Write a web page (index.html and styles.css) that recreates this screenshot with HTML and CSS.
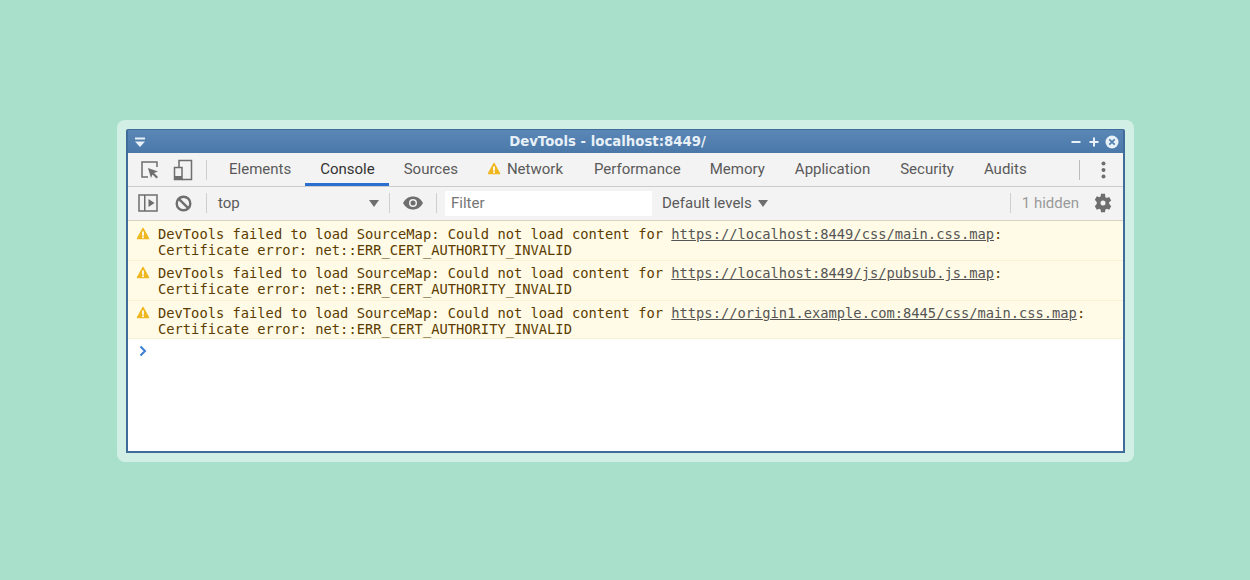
FILE: index.html
```html
<!DOCTYPE html>
<html lang="en">
<head>
<meta charset="utf-8">
<title>DevTools</title>
<link rel="stylesheet" href="styles.css">
</head>
<body>
<main class="panel">
  <div class="window">
    <header class="titlebar">
      <svg class="menu-icon" width="12" height="10" viewBox="0 0 12 10"><rect x="1" y="0.5" width="10" height="2" fill="#e8f0f8"/><path d="M1 4.5h10L6 10z" fill="#e8f0f8"/></svg>
      <span class="title">DevTools - localhost:8449/</span>
      <div class="winbtns">
        <svg width="10" height="10" viewBox="0 0 10 10"><rect x="0.5" y="4" width="9" height="2" fill="#e8f0f8"/></svg>
        <svg width="10" height="10" viewBox="0 0 10 10"><path d="M4 0.5h2V4h3.500v2H6v3.500H4V6H0.500V4H4z" fill="#e8f0f8"/></svg>
        <svg class="close" width="14" height="14" viewBox="0 0 14 14"><circle cx="7" cy="7" r="6.500" fill="#e8f0f8"/><path d="M4.300 4.300l5.400 5.400M9.700 4.300l-5.400 5.400" stroke="#4f7fb0" stroke-width="1.700"/></svg>
      </div>
    </header>
    <nav class="tabs">
      <div class="tool-icons">
        <svg width="20" height="20" viewBox="0 0 20 20"><path d="M8 17H2V2h15v5" fill="none" stroke="#6e6e6e" stroke-width="1.500"/><path d="M8 8l10 3.500-4 1.500 4 4-1.500 1.500-4-4L11 18z" fill="#6e6e6e"/></svg>
        <svg width="20" height="22" viewBox="0 0 20 22"><path d="M6 8V1.500h12.500v19H9" fill="none" stroke="#6e6e6e" stroke-width="1.500"/><rect x="1.500" y="8.500" width="7.500" height="12" fill="none" stroke="#6e6e6e" stroke-width="1.500"/><rect x="1.500" y="17" width="7.500" height="3.500" fill="#6e6e6e"/></svg>
      </div>
      <span class="sep"></span>
      <a class="tab tight">Elements</a>
      <a class="tab tight active">Console</a>
      <a class="tab">Sources</a>
      <a class="tab warn-tab"><svg class="warn" width="14" height="13" viewBox="0 0 14 13"><path d="M7 1.500L12.500 11.500H1.500z" fill="#efb71f" stroke="#efb71f" stroke-width="1.500" stroke-linejoin="round"/><rect x="6.100" y="4.500" width="1.800" height="4.200" fill="#fff"/><rect x="6.100" y="9.400" width="1.800" height="1.700" fill="#fff"/></svg>Network</a>
      <a class="tab tight">Performance</a>
      <a class="tab">Memory</a>
      <a class="tab">Application</a>
      <a class="tab">Security</a>
      <a class="tab">Audits</a>
      <span class="sep tall"></span>
      <svg class="dots" width="5" height="18" viewBox="0 0 5 18"><circle cx="2.500" cy="2.500" r="2" fill="#6e6e6e"/><circle cx="2.500" cy="9" r="2" fill="#6e6e6e"/><circle cx="2.500" cy="15.500" r="2" fill="#6e6e6e"/></svg>
    </nav>
    <div class="toolbar">
      <svg class="sidebar-icon" width="20" height="18" viewBox="0 0 20 18"><rect x="1" y="1" width="18" height="16" fill="none" stroke="#6e6e6e" stroke-width="1.500"/><rect x="6" y="1" width="1.500" height="16" fill="#6e6e6e"/><path d="M10.500 5l6 4-6 4z" fill="#6e6e6e"/></svg>
      <svg class="clear-icon" width="17" height="17" viewBox="0 0 17 17"><circle cx="8.500" cy="8.500" r="6.800" fill="none" stroke="#6e6e6e" stroke-width="2.400"/><path d="M3.800 3.800l9.400 9.400" stroke="#6e6e6e" stroke-width="2.400"/></svg>
      <span class="sep"></span>
      <div class="context"><span>top</span><i class="caret"></i></div>
      <span class="sep"></span>
      <svg class="eye" width="20" height="14" viewBox="0 0 20 14"><path d="M0 7C2.500 2.500 6 0.500 10 0.500S17.500 2.500 20 7c-2.500 4.500-6 6.500-10 6.500S2.500 11.500 0 7z" fill="#6e6e6e"/><circle cx="10" cy="7" r="4" fill="#f3f3f3"/><circle cx="10" cy="7" r="2.500" fill="#6e6e6e"/></svg>
      <span class="sep"></span>
      <div class="filter">Filter</div>
      <div class="levels">Default levels<i class="caret"></i></div>
      <span class="spacer"></span>
      <span class="sep"></span>
      <span class="hidden-count">1 hidden</span>
      <svg class="gear" width="20" height="20" viewBox="0 0 24 24"><path fill="#6e6e6e" fill-rule="evenodd" d="M19.400 13a7.600 7.600 0 0 0 0-2l2.400-1.900-2.400-4.200-2.900 1.200a7.400 7.400 0 0 0-1.700-1L14.400 1H9.600l-.4 3.100a7.400 7.400 0 0 0-1.700 1L4.600 3.900 2.200 8.100 4.600 11a7.600 7.600 0 0 0 0 2l-2.400 2.900 2.400 4.200 2.900-1.200a7.400 7.400 0 0 0 1.700 1l.4 3.100h4.800l.4-3.100a7.400 7.400 0 0 0 1.700-1l2.900 1.200 2.400-4.200zM12 15a3 3 0 1 1 0-6 3 3 0 0 1 0 6z"/></svg>
    </div>
    <section class="console">
      <div class="msg">
        <svg class="warn" width="14" height="13" viewBox="0 0 14 13"><path d="M7 1.500L12.500 11.500H1.500z" fill="#efb71f" stroke="#efb71f" stroke-width="1.500" stroke-linejoin="round"/><rect x="6.100" y="4.500" width="1.800" height="4.200" fill="#fff"/><rect x="6.100" y="9.400" width="1.800" height="1.700" fill="#fff"/></svg>
        <p>DevTools failed to load SourceMap: Could not load content for <u>https://localhost:8449/css/main.css.map</u>:<br>Certificate error: net::ERR_CERT_AUTHORITY_INVALID</p>
      </div>
      <div class="msg">
        <svg class="warn" width="14" height="13" viewBox="0 0 14 13"><path d="M7 1.500L12.500 11.500H1.500z" fill="#efb71f" stroke="#efb71f" stroke-width="1.500" stroke-linejoin="round"/><rect x="6.100" y="4.500" width="1.800" height="4.200" fill="#fff"/><rect x="6.100" y="9.400" width="1.800" height="1.700" fill="#fff"/></svg>
        <p>DevTools failed to load SourceMap: Could not load content for <u>https://localhost:8449/js/pubsub.js.map</u>:<br>Certificate error: net::ERR_CERT_AUTHORITY_INVALID</p>
      </div>
      <div class="msg">
        <svg class="warn" width="14" height="13" viewBox="0 0 14 13"><path d="M7 1.500L12.500 11.500H1.500z" fill="#efb71f" stroke="#efb71f" stroke-width="1.500" stroke-linejoin="round"/><rect x="6.100" y="4.500" width="1.800" height="4.200" fill="#fff"/><rect x="6.100" y="9.400" width="1.800" height="1.700" fill="#fff"/></svg>
        <p>DevTools failed to load SourceMap: Could not load content for <u>https://origin1.example.com:8445/css/main.css.map</u>:<br>Certificate error: net::ERR_CERT_AUTHORITY_INVALID</p>
      </div>
      <svg class="prompt" width="8" height="12" viewBox="0 0 8 12"><path d="M1.500 1.500L6 6l-4.500 4.500" fill="none" stroke="#3a7fd5" stroke-width="2"/></svg>
    </section>
  </div>
</main>
</body>
</html>
```
FILE: styles.css
```css
html, body {
  margin: 0;
  height: 100%;
}
body {
  background: #a8e0cb;
  overflow: hidden;
  padding-top: 120px;
  box-sizing: border-box;
  font-family: Roboto, "Liberation Sans", sans-serif;
}
.panel {
  width: 1017px;
  height: 342px;
  margin-left: 117px;
  padding: 9px;
  box-sizing: border-box;
  background: #d1efe5;
  border-radius: 8px;
}
.window {
  height: 100%;
  box-sizing: border-box;
  border: 2px solid #3f6c9b;
  border-top-width: 1px;
  border-radius: 2px 2px 0 0;
  background: #fff;
  display: flex;
  flex-direction: column;
}
.titlebar {
  height: 23px;
  flex: none;
  display: flex;
  align-items: center;
  justify-content: space-between;
  padding: 0 4px 0 6px;
  background: linear-gradient(#5a87b6, #4a78a8);
  position: relative;
}
.title {
  position: absolute;
  left: 0;
  right: 36px;
  top: 4px;
  text-align: center;
  font: bold 13.300px "DejaVu Sans", sans-serif;
  color: #e8f0f8;
}
.winbtns {
  display: flex;
  align-items: center;
  gap: 8px;
}
.winbtns .close {
  margin-left: -2px;
}
.tabs {
  height: 34px;
  flex: none;
  box-sizing: border-box;
  border-bottom: 1px solid #cccccc;
  background: #f3f3f3;
  display: flex;
  align-items: center;
  font-size: 15px;
  color: #5a5a5a;
  padding-left: 12px;
}
.tool-icons {
  display: flex;
  align-items: center;
  gap: 13px;
}
.sep {
  width: 1px;
  height: 20px;
  background: #cfcfcf;
  flex: none;
}
.tabs > .sep:first-of-type {
  margin: 0 7px 0 13px;
}
.tab {
  height: 33px;
  box-sizing: border-box;
  padding: 0 15px 2px;
  display: flex;
  align-items: center;
  gap: 5px;
}
.tab.warn-tab {
  padding-left: 14px;
  padding-right: 16px;
  gap: 6px;
}
.tab.tight {
  padding-right: 14px;
}
.tab.active {
  color: #333;
  border-bottom: 3px solid #2a6fd0;
  padding-top: 1px;
  padding-bottom: 0;
  padding-right: 14px;
}
.sep.tall {
  margin-left: auto;
  background: #bdbdbd;
}
.dots {
  margin: 0 17px 0 21px;
}
.toolbar {
  height: 34px;
  flex: none;
  box-sizing: border-box;
  border-bottom: 1px solid #d8d2c0;
  background: #f3f3f3;
  display: flex;
  align-items: center;
  font-size: 15px;
  color: #5a5a5a;
  padding: 0 0 1px 10px;
}
.clear-icon {
  margin: 0 14px 0 17px;
}
.context {
  width: 182px;
  box-sizing: border-box;
  padding: 0 10px 0 11px;
  display: flex;
  align-items: center;
  justify-content: space-between;
}
.caret {
  width: 0;
  height: 0;
  border-left: 5px solid transparent;
  border-right: 5px solid transparent;
  border-top: 7px solid #6e6e6e;
}
.eye {
  margin: 0 13px;
}
.filter {
  width: 207px;
  height: 25px;
  box-sizing: border-box;
  margin-left: 8px;
  padding-left: 6px;
  background: #fff;
  color: #757575;
  display: flex;
  align-items: center;
}
.levels {
  margin-left: 10px;
  display: flex;
  align-items: center;
  gap: 6px;
}
.spacer {
  flex: 1;
}
.hidden-count {
  color: #9a9a9a;
  margin: 0 14px 0 11px;
}
.gear {
  margin-right: 10px;
}
.console {
  flex: 1;
  background: #fff;
}
.msg {
  height: 40px;
  box-sizing: border-box;
  background: #fffbe6;
  border-bottom: 1px solid #f9f3d5;
  padding: 4px 0 0 8px;
  display: flex;
  gap: 8px;
}
.msg:first-child {
  padding-top: 5px;
}
.msg:nth-child(3) {
  height: 38px;
}
.msg .warn {
  flex: none;
  margin-top: 1px;
}
.msg p {
  margin: 0;
  font: 13.750px/16px "DejaVu Sans Mono", monospace;
  color: #5c3c00;
  white-space: nowrap;
}
.msg u {
  color: #555;
}
.prompt {
  display: block;
  margin: 6px 0 0 11px;
}
```
